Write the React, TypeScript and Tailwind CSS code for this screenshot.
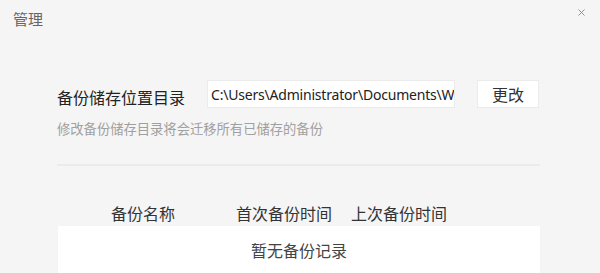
import { X } from "lucide-react";

export default function App() {
  return (
    <div className="w-[600px] h-[273px] overflow-hidden bg-[#f5f5f5] font-['Microsoft_YaHei','Noto_Sans_CJK_SC',sans-serif] text-[#333]">
      {/* title bar */}
      <div className="h-[36px] flex items-center justify-between pl-[13px] pr-[13px]">
        <span className="text-[15px] text-[#666] leading-none">管理</span>
        <X className="w-[11px] h-[11px] text-[#888] -mt-[12px]" strokeWidth={2} />
      </div>

      <div className="pl-[57px] pr-[60px]">
        {/* storage dir */}
        <div className="mt-[44px] flex items-center">
          <span className="text-[16px] leading-[20px] w-[150px] pt-[5px] text-[#222]">备份储存位置目录</span>
          <input
            readOnly
            value="C:\Users\Administrator\Documents\WeChat Files"
            className="w-[248px] h-[28px] bg-white border border-[#ebebeb] pl-[3px] pr-0 outline-none text-[14px] text-[#222] font-['Noto_Sans',sans-serif] tracking-[-0.2px]"
          />
          <button className="ml-[22px] w-[62px] h-[28px] bg-white border border-[#ebebeb] text-[16px] text-[#333] flex items-center justify-center">
            更改
          </button>
        </div>
        <div className="mt-[11px] text-[13.3px] leading-[20px] text-[#a0a0a0]">
          修改备份储存目录将会迁移所有已储存的备份
        </div>

        <div className="mt-[25px] h-[2px] bg-[#ebebeb]" />

        {/* table */}
        <div className="mt-[37px] pl-[2px] grid grid-cols-[168px_114px_116px_1fr] text-[16px] leading-[20px] text-[#333]">
          <span className="text-center">备份名称</span>
          <span className="text-center">首次备份时间</span>
          <span className="text-center">上次备份时间</span>
          <span />
        </div>
        <div className="mt-[3px] ml-[1px] h-[60px] bg-white pt-[14px] text-center text-[16px] leading-[20px] text-[#444]">
          暂无备份记录
        </div>
      </div>
    </div>
  );
}
